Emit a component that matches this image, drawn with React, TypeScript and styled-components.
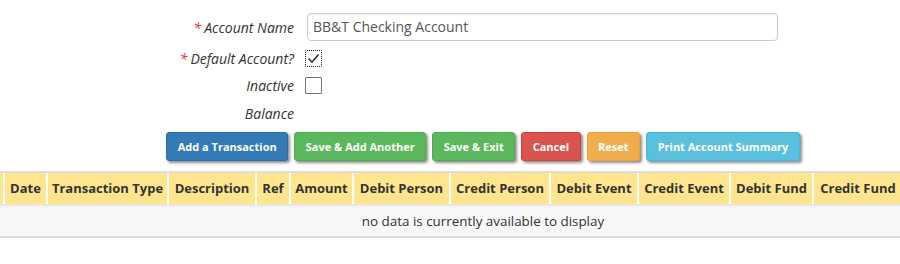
import styled, { createGlobalStyle } from "styled-components";

const GlobalStyle = createGlobalStyle`
  html, body {
    margin: 0;
    padding: 0;
    background: #ffffff;
    overflow: hidden;
  }
  body {
    font-family: "Open Sans", "Noto Sans", sans-serif;
    color: #333333;
  }
`;

// Window onto the page: the real page is wider than the window, like a scrolled grid
const Viewport = styled.div`
  width: 100%;
  overflow: hidden;
`;

const Page = styled.div`
  width: 966px;
`;

// Form
const Form = styled.div`
  display: flex;
  flex-direction: column;
  padding-top: 13px;
`;

const FieldRow = styled.div<{ $h: number; $gap?: number }>`
  display: grid;
  grid-template-columns: 294px 473px;
  column-gap: 11px;
  align-items: center;
  height: ${(p) => p.$h}px;
  margin-top: ${(p) => p.$gap ?? 0}px;
`;

const Label = styled.label`
  font-style: italic;
  font-size: 14px;
  color: #333333;
  text-align: right;
  white-space: nowrap;
`;

const Required = styled.span`
  color: #e02b27;
  font-style: italic;
  margin-right: 3px;
`;

const TextInput = styled.div`
  box-sizing: border-box;
  height: 28px;
  margin-left: 2px;
  border: 1px solid #cccccc;
  border-radius: 4px;
  padding: 0 5px;
  font-size: 14px;
  line-height: 26px;
  color: #555555;
  box-shadow: inset 0 1px 1px rgba(0, 0, 0, 0.05);
`;

const Check = styled.span<{ $focused?: boolean }>`
  box-sizing: border-box;
  display: flex;
  align-items: center;
  justify-content: center;
  width: 17px;
  height: 17px;
  background: #ffffff;
  border: 1px ${(p) => (p.$focused ? "dotted #222222" : "solid #767676")};
  border-radius: 1px;
`;

// Buttons
const ButtonBar = styled.div`
  display: flex;
  justify-content: center;
  gap: 6px;
  margin-top: 4px;
`;

const palette = {
  blue: ["#337ab7", "#2e6da4"],
  green: ["#5cb85c", "#4cae4c"],
  red: ["#d9534f", "#d43f3a"],
  orange: ["#f0ad4e", "#eea236"],
  cyan: ["#5bc0de", "#46b8da"],
};

const Button = styled.button<{ $tone: keyof typeof palette }>`
  height: 29px;
  padding: 0 10.5px;
  font-family: "Open Sans", sans-serif;
  font-weight: 700;
  font-size: 11px;
  color: #ffffff;
  background: ${(p) => palette[p.$tone][0]};
  border: 1px solid ${(p) => palette[p.$tone][1]};
  border-radius: 3px;
  box-shadow: 2px 2px 3px rgba(0, 0, 0, 0.45);
  cursor: pointer;
  white-space: nowrap;
`;

// Grid
const Grid = styled.div`
  margin-top: 10px;
  border-top: 2px solid #dddddd;
  border-bottom: 2px solid #dddddd;
`;

const cols = "3px 41px 119px 86px 32px 61px 95px 98px 86px 90px 81px 88px 1fr";

const HeaderRow = styled.div`
  display: grid;
  grid-template-columns: ${cols};
  column-gap: 2px;
  background: #ffffff;
  border-bottom: 2px solid #e6e6e6;
`;

const HeaderCell = styled.div`
  height: 31px;
  background: #ffe68e;
  font-weight: 700;
  font-size: 13px;
  color: #333333;
  line-height: 31px;
  text-align: center;
  white-space: nowrap;
  overflow: hidden;
`;

const EmptyRow = styled.div`
  height: 30px;
  background: #f7f7f7;
  font-size: 13.4px;
  line-height: 30px;
  text-align: center;
  color: #333333;
`;

const headers = [
  "",
  "Date",
  "Transaction Type",
  "Description",
  "Ref",
  "Amount",
  "Debit Person",
  "Credit Person",
  "Debit Event",
  "Credit Event",
  "Debit Fund",
  "Credit Fund",
  "",
];

const App = () => {
  return (
    <Viewport>
      <GlobalStyle />
      <Page>
        <Form>
          <FieldRow $h={28}>
            <Label>
              <Required>*</Required>Account Name
            </Label>
            <TextInput>BB&amp;T Checking Account</TextInput>
          </FieldRow>
          <FieldRow $h={28} $gap={3}>
            <Label>
              <Required>*</Required>Default Account?
            </Label>
            <Check $focused>
              <svg width="13" height="11" viewBox="0 0 13 11">
                <path d="M1.5 5.5 L5 9 L11.5 1.5" fill="none" stroke="#333" strokeWidth="1.6" />
              </svg>
            </Check>
          </FieldRow>
          <FieldRow $h={27}>
            <Label>Inactive</Label>
            <Check />
          </FieldRow>
          <FieldRow $h={29}>
            <Label>Balance</Label>
            <span />
          </FieldRow>
        </Form>

        <ButtonBar>
          <Button $tone="blue">Add a Transaction</Button>
          <Button $tone="green">Save &amp; Add Another</Button>
          <Button $tone="green">Save &amp; Exit</Button>
          <Button $tone="red">Cancel</Button>
          <Button $tone="orange">Reset</Button>
          <Button $tone="cyan">Print Account Summary</Button>
        </ButtonBar>

        <Grid>
          <HeaderRow>
            {headers.map((h, i) => (
              <HeaderCell key={i}>{h}</HeaderCell>
            ))}
          </HeaderRow>
          <EmptyRow>no data is currently available to display</EmptyRow>
        </Grid>
      </Page>
    </Viewport>
  );
};

export default App;
